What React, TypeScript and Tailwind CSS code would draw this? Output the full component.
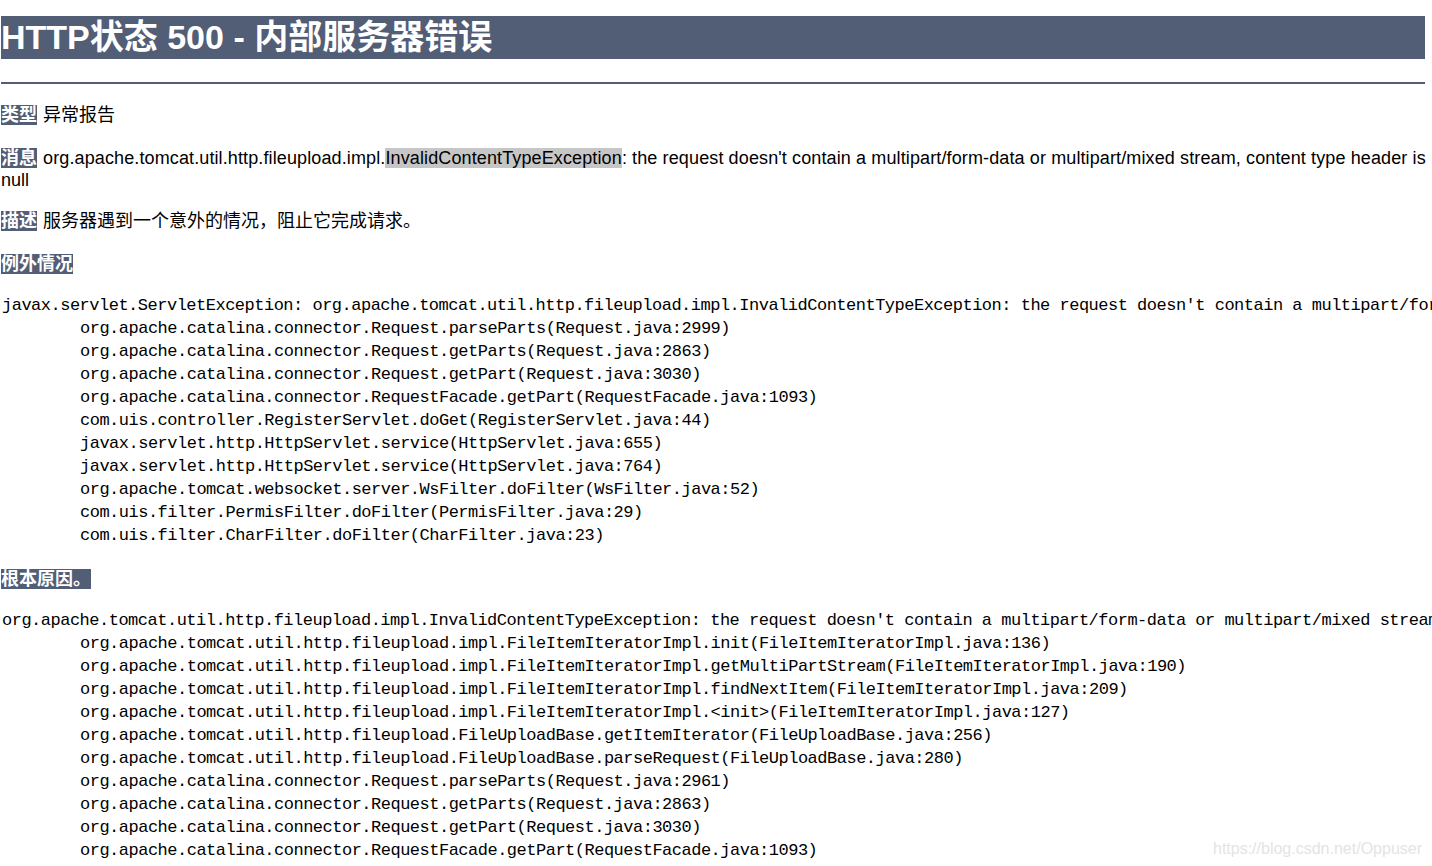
const exceptionTrace = [
  'org.apache.catalina.connector.Request.parseParts(Request.java:2999)',
  'org.apache.catalina.connector.Request.getParts(Request.java:2863)',
  'org.apache.catalina.connector.Request.getPart(Request.java:3030)',
  'org.apache.catalina.connector.RequestFacade.getPart(RequestFacade.java:1093)',
  'com.uis.controller.RegisterServlet.doGet(RegisterServlet.java:44)',
  'javax.servlet.http.HttpServlet.service(HttpServlet.java:655)',
  'javax.servlet.http.HttpServlet.service(HttpServlet.java:764)',
  'org.apache.tomcat.websocket.server.WsFilter.doFilter(WsFilter.java:52)',
  'com.uis.filter.PermisFilter.doFilter(PermisFilter.java:29)',
  'com.uis.filter.CharFilter.doFilter(CharFilter.java:23)',
];

const rootTrace = [
  'org.apache.tomcat.util.http.fileupload.impl.FileItemIteratorImpl.init(FileItemIteratorImpl.java:136)',
  'org.apache.tomcat.util.http.fileupload.impl.FileItemIteratorImpl.getMultiPartStream(FileItemIteratorImpl.java:190)',
  'org.apache.tomcat.util.http.fileupload.impl.FileItemIteratorImpl.findNextItem(FileItemIteratorImpl.java:209)',
  'org.apache.tomcat.util.http.fileupload.impl.FileItemIteratorImpl.<init>(FileItemIteratorImpl.java:127)',
  'org.apache.tomcat.util.http.fileupload.FileUploadBase.getItemIterator(FileUploadBase.java:256)',
  'org.apache.tomcat.util.http.fileupload.FileUploadBase.parseRequest(FileUploadBase.java:280)',
  'org.apache.catalina.connector.Request.parseParts(Request.java:2961)',
  'org.apache.catalina.connector.Request.getParts(Request.java:2863)',
  'org.apache.catalina.connector.Request.getPart(Request.java:3030)',
  'org.apache.catalina.connector.RequestFacade.getPart(RequestFacade.java:1093)',
  'com.uis.controller.RegisterServlet.doGet(RegisterServlet.java:44)',
  'javax.servlet.http.HttpServlet.service(HttpServlet.java:655)',
];

const mono = "font-['Liberation_Mono','Noto_Sans_CJK_SC',monospace] text-[17px] tracking-[-0.5px] leading-[23px] text-black whitespace-pre";

const Label = ({ children }: { children: React.ReactNode }) => (
  <span className="inline-block h-[20px] leading-[20px] bg-[#525D76] text-white font-bold tracking-normal mr-[6px] align-middle">
    {children}
  </span>
);

const Trace = ({ head, lines }: { head: string; lines: string[] }) => (
  <div className={mono}>
    <div className="pl-[1px]">{head}</div>
    {lines.map((l, i) => (
      <div key={i} className="pl-[79px]">
        {l}
      </div>
    ))}
  </div>
);

export default function App() {
  return (
    <div className="relative w-full h-[866px] overflow-hidden bg-white font-['Liberation_Sans','Noto_Sans_CJK_SC',sans-serif] text-black">
      <div className="pl-[1px]">
        {/* Title */}
        <h1 className="mt-[16px] w-[1424px] h-[43px] leading-[43px] bg-[#525D76] text-white font-bold text-[34px] whitespace-nowrap">
          HTTP状态 500 - 内部服务器错误
        </h1>
        <div className="mt-[23px] w-[1424px] h-[2px] bg-[#525D76]" />

        {/* Report */}
        <div className="mt-[19px] h-[23px] leading-[23px] text-[18px] whitespace-nowrap">
          <Label>类型</Label>
          <span className="align-middle">异常报告</span>
        </div>

        <div className="mt-[20px] h-[23px] leading-[23px] text-[18px] whitespace-nowrap">
          <Label>消息</Label>
          <span className="align-middle tracking-[0.12px]">
            org.apache.tomcat.util.http.fileupload.impl.
            <span className="bg-[#c6c6c6]">InvalidContentTypeException</span>
            : the request doesn't contain a multipart/form-data or multipart/mixed stream, content type header is
          </span>
        </div>
        <div className="h-[23px] leading-[23px] text-[18px]">null</div>

        <div className="mt-[17px] h-[23px] leading-[23px] text-[18px] whitespace-nowrap">
          <Label>描述</Label>
          <span className="align-middle">服务器遇到一个意外的情况，阻止它完成请求。</span>
        </div>

        <div className="mt-[20px] h-[23px] leading-[23px] text-[18px]">
          <Label>例外情况</Label>
        </div>

        <div className="mt-[19px]">
          <Trace
            head="javax.servlet.ServletException: org.apache.tomcat.util.http.fileupload.impl.InvalidContentTypeException: the request doesn't contain a multipart/form-data or multipart/mixed stream, content type header is null"
            lines={exceptionTrace}
          />
        </div>

        <div className="mt-[20px] h-[23px] leading-[23px] text-[18px]">
          <Label>根本原因。</Label>
        </div>

        <div className="mt-[19px]">
          <Trace
            head="org.apache.tomcat.util.http.fileupload.impl.InvalidContentTypeException: the request doesn't contain a multipart/form-data or multipart/mixed stream, content type header is null"
            lines={rootTrace}
          />
        </div>
      </div>

      {/* watermark */}
      <div className="absolute right-[10px] top-[837px] text-[16px] text-[#e4e4e4] font-['Liberation_Sans',sans-serif]">
        https://blog.csdn.net/Oppuser
      </div>
    </div>
  );
}
